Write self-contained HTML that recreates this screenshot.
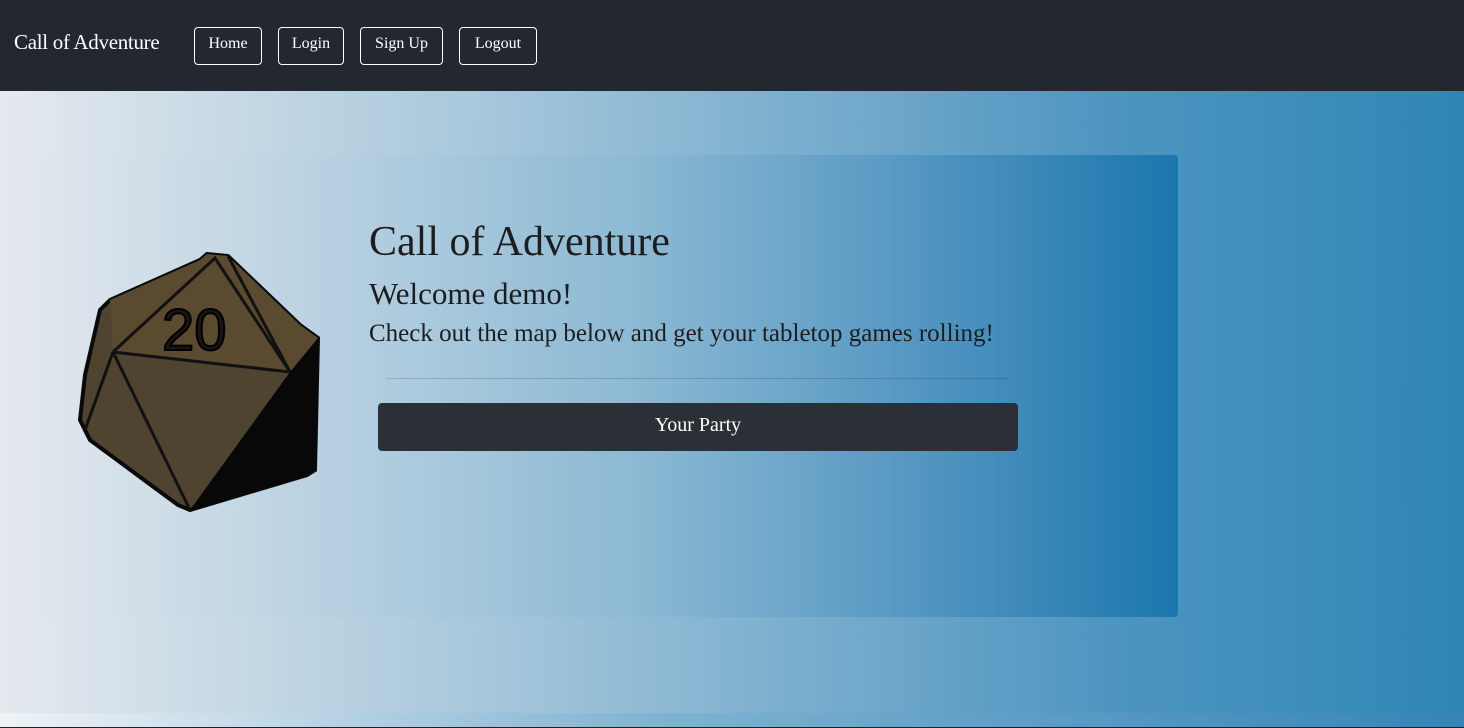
<!DOCTYPE html>
<html><head><meta charset="utf-8"><style>
*{margin:0;padding:0;box-sizing:border-box}
html,body{width:1464px;height:728px;overflow:hidden}
body{font-family:"Liberation Serif",serif;background:#222;position:relative}
.nav{position:absolute;left:0;top:0;width:1464px;height:91px;background:#23272f;color:#fff}
.brand{position:absolute;left:14px;top:30px;font-size:21px;letter-spacing:-0.3px}
.btn{position:absolute;top:27px;height:38px;border:1px solid #fff;border-radius:4px;color:#fff;font-size:16px;line-height:32px;text-align:center}
.main{position:absolute;left:0;top:91px;width:1464px;height:622px;background:linear-gradient(90deg,#e5e9ee 0%,#a3c5da 35%,#4f96c1 75%,#2f86b6 100%)}
.strip{position:absolute;left:0;top:713px;width:1464px;height:14px;background:linear-gradient(90deg,#eef3f6,#80b3d2 45%,#3585b6)}
.line{position:absolute;left:0;top:727px;width:1464px;height:1px;background:#1d2128}
.card{position:absolute;left:0;top:155px;width:1178px;height:462px;border-radius:0 4px 4px 0;background:linear-gradient(90deg,#e5e9ee 0%,#b4cfe0 30%,#8ab8d3 55%,#4f93c0 80%,#1a77ad 100%)}
.t1{position:absolute;left:369px;top:218px;font-size:42px;color:#1d1d1d}
.t2{position:absolute;left:369px;top:276px;font-size:31px;color:#1d1d1d}
.t3{position:absolute;left:369px;top:320px;font-size:25px;color:#1d1d1d}
.hr{position:absolute;left:386px;top:378px;width:624px;height:1px;background:rgba(0,0,0,0.15)}
.party{position:absolute;left:378px;top:403px;width:640px;height:48px;background:#2b3036;border-radius:4px;color:#fff;font-size:20px;text-align:center;line-height:44px}
</style></head><body>
<div class="nav">
<div class="brand">Call of Adventure</div>
<div class="btn" style="left:194px;width:68px">Home</div>
<div class="btn" style="left:278px;width:66px">Login</div>
<div class="btn" style="left:360px;width:83px">Sign Up</div>
<div class="btn" style="left:459px;width:78px">Logout</div>
</div>
<div class="main"></div>
<div class="card"></div>
<svg style="position:absolute;left:0;top:0" width="400" height="540">
<polygon points="207,254 228,256 300,325 318,338 315,470 307,475 190,510 178,505 90,440 80,420 85,375 100,310 110,300 200,260" fill="#4e4430" stroke="#0a0a0a" stroke-width="4"/>
<polygon points="110,300 200,260 207,254 228,256 300,325 318,338 290,372 113,352" fill="#5a4a30"/>
<polygon points="290,372 318,338 315,470 307,475 190,510" fill="#080808"/>
<g stroke="#111" stroke-width="3" fill="none">
<polyline points="113,352 290,372"/>
<polyline points="113,352 215,258 290,372"/>
<polyline points="113,352 190,510"/>
<polyline points="113,352 85,430"/>
<polyline points="228,256 290,372"/>
</g>
<text x="162" y="350" font-family="Liberation Sans,sans-serif" font-size="58" fill="#1a1410" stroke="#000" stroke-width="2">20</text>
</svg>
<div class="t1">Call of Adventure</div>
<div class="t2">Welcome demo!</div>
<div class="t3">Check out the map below and get your tabletop games rolling!</div>
<div class="hr"></div>
<div class="party">Your Party</div>
<div class="strip"></div>
<div class="line"></div>
</body></html>
